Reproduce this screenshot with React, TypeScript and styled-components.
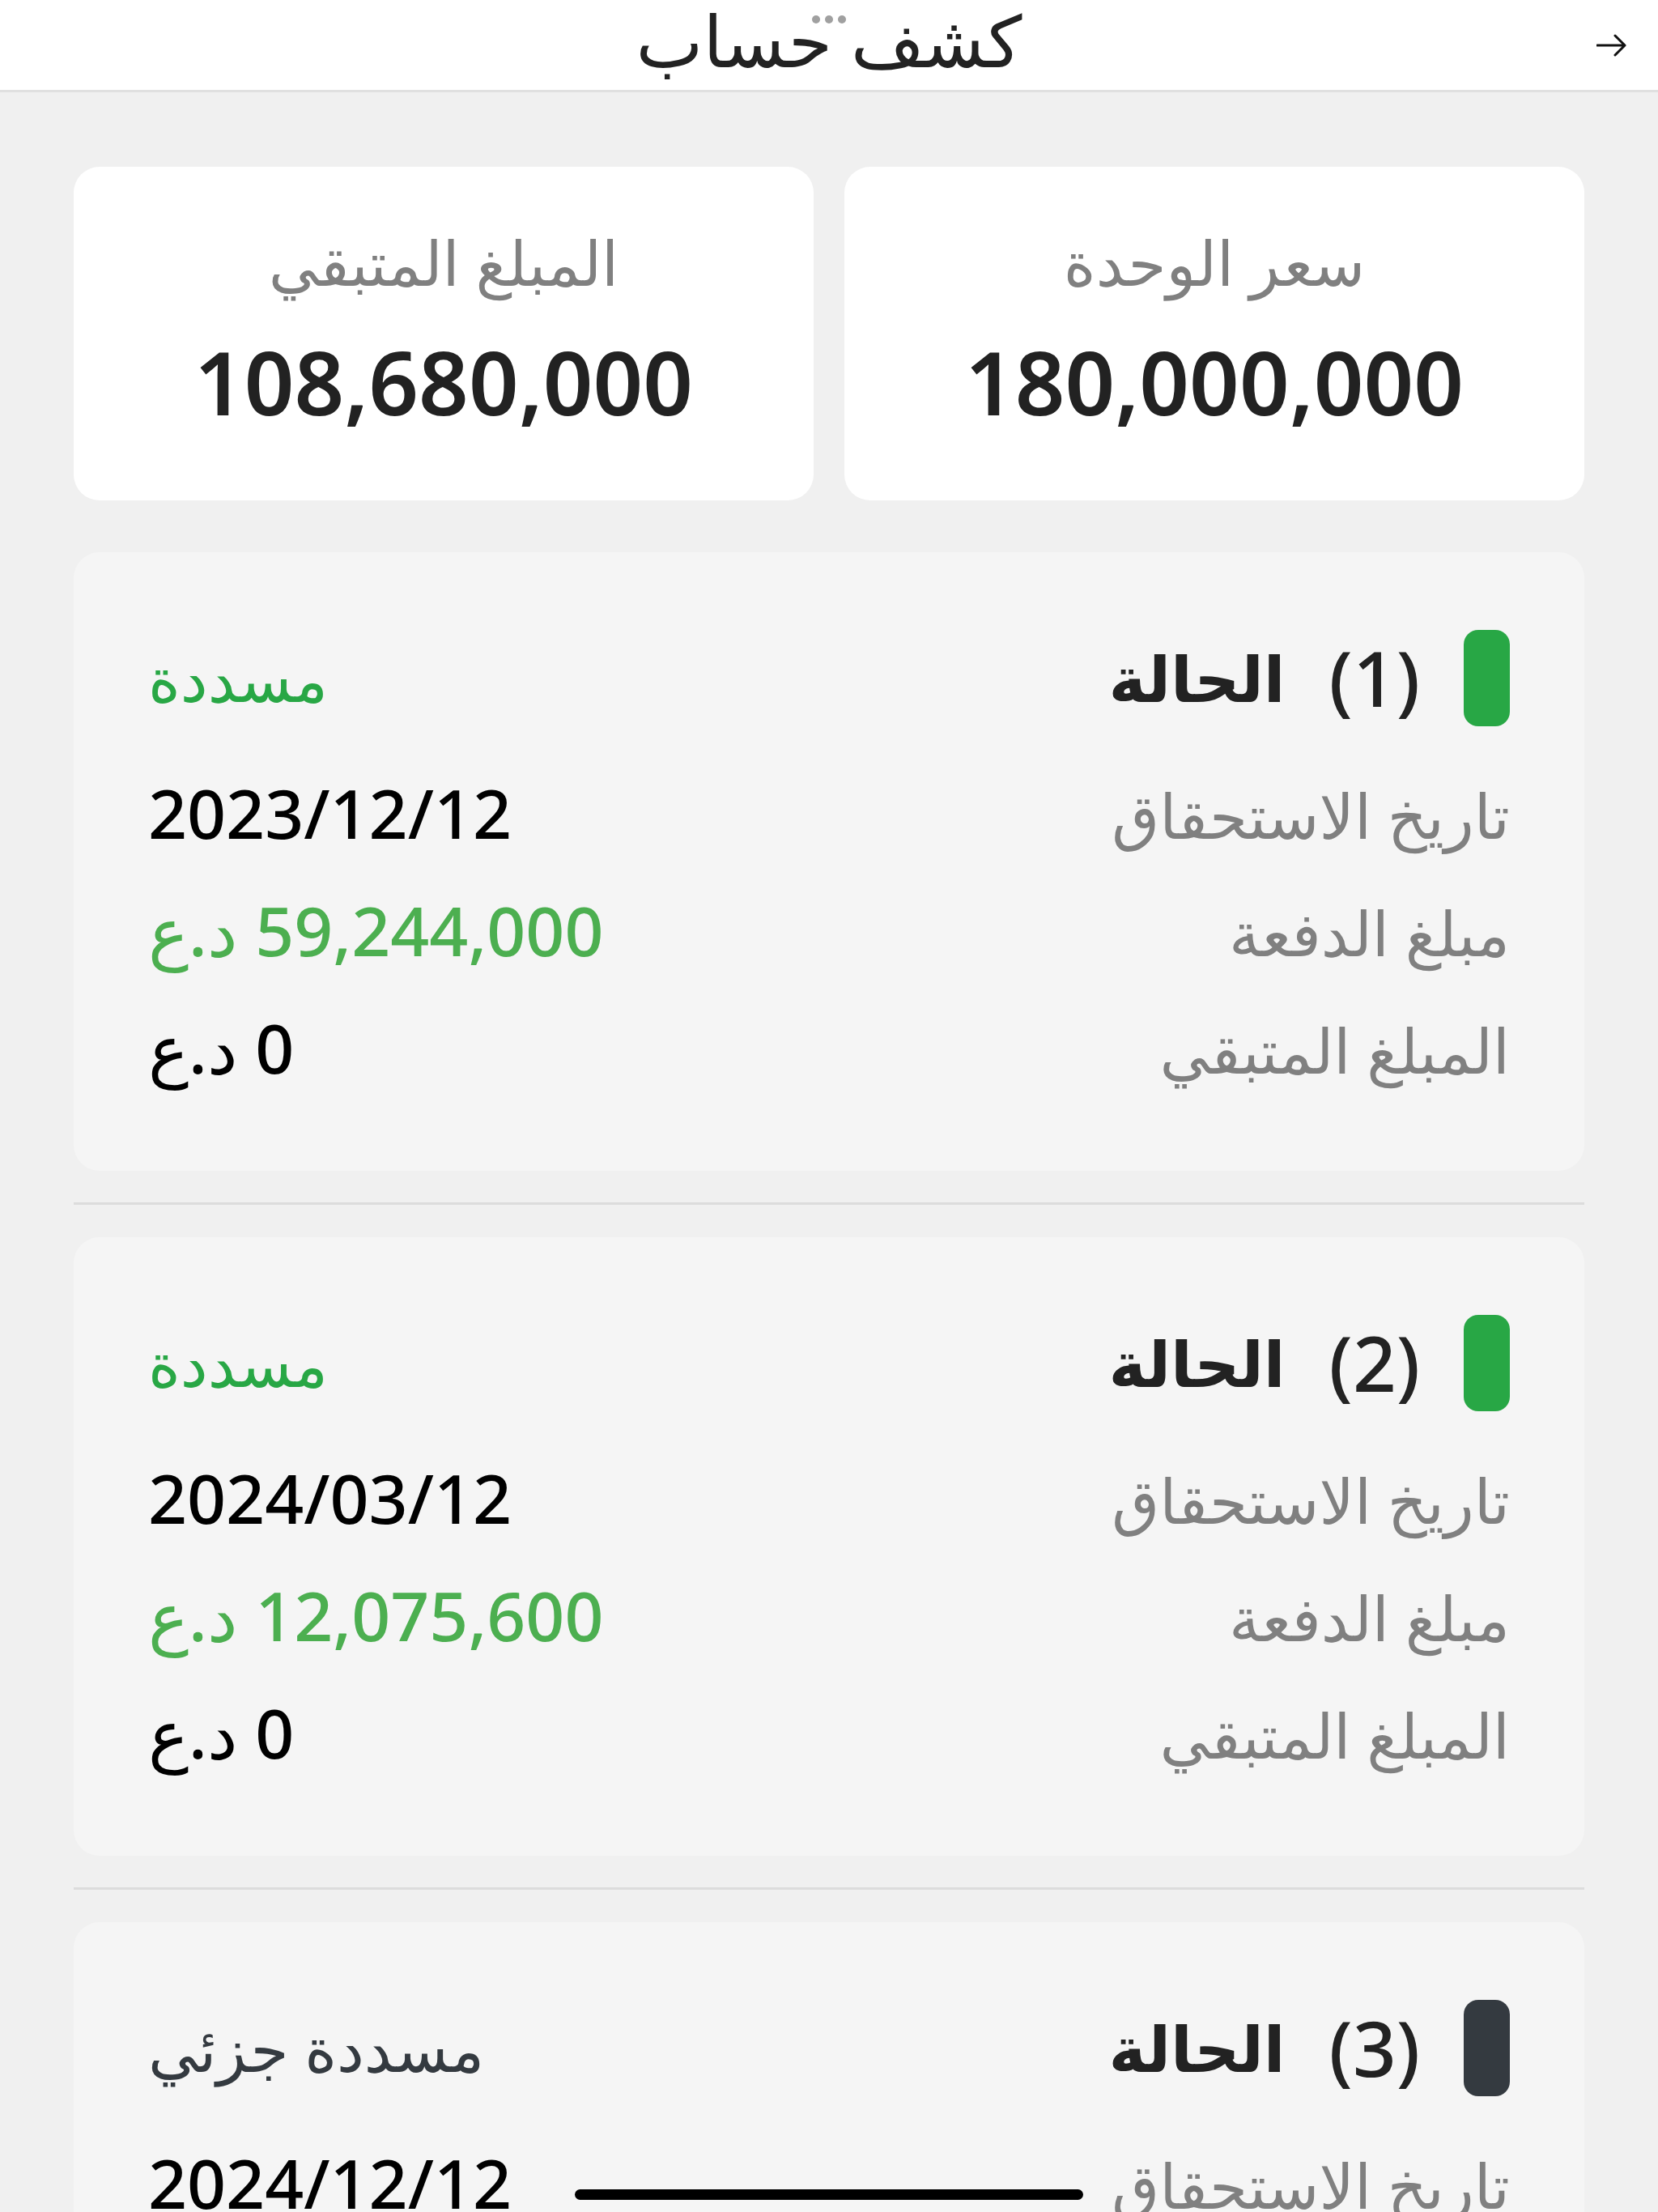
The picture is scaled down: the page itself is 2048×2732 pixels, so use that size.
import React from "react";
import styled, { createGlobalStyle } from "styled-components";

const GlobalStyle = createGlobalStyle`
  html, body {
    margin: 0;
    padding: 0;
  }
  body {
    background: #f0f0f0;
    font-family: "Noto Sans", "DejaVu Sans", sans-serif;
    color: #222;
  }
`;

const Screen = styled.div`
  position: relative;
  height: 100vh;
  overflow: hidden;
  direction: rtl;
  background: #f0f0f0;
`;

const TopBar = styled.header`
  display: grid;
  grid-template-columns: 1fr auto 1fr;
  align-items: start;
  height: 111px;
  background: #fff;
  border-bottom: 3px solid #e0e0e0;
`;

const BackButton = styled.button`
  justify-self: start;
  align-self: center;
  margin-inline-start: 38px;
  padding: 0;
  border: 0;
  background: none;
  display: flex;
  color: #111;
  cursor: pointer;
`;

const Title = styled.h1`
  margin: 0;
  font-size: 88px;
  font-weight: 400;
  line-height: 98px;
  color: #222;
`;

const WindowDots = styled.div`
  position: absolute;
  top: 19px;
  left: 50%;
  transform: translateX(-50%);
  display: flex;
  gap: 6px;
`;

const Dot = styled.span`
  width: 10px;
  height: 10px;
  border-radius: 50%;
  background: #a0a0a0;
`;

const Content = styled.main`
  padding: 92px 91px 0;
`;

const StatsGrid = styled.section`
  display: grid;
  grid-template-columns: 1fr 1fr;
  gap: 38px;
  margin-bottom: 64px;
`;

const StatCard = styled.div`
  background: #fff;
  border-radius: 32px;
  padding: 68px 24px 81px;
  text-align: center;
`;

const StatLabel = styled.div`
  font-size: 76px;
  line-height: 100px;
  color: #808080;
  margin-bottom: 33px;
`;

const StatValue = styled.div`
  font-size: 108px;
  line-height: 130px;
  font-weight: 600;
  color: #222;
  direction: ltr;
`;

const InstallmentCard = styled.article`
  background: #f5f5f5;
  border-radius: 32px;
  padding: 96px 92px 80px;
`;

const CardHeader = styled.div`
  display: flex;
  align-items: center;
  justify-content: space-between;
  height: 119px;
  margin-bottom: 34px;
`;

const HeaderStart = styled.div`
  display: flex;
  align-items: center;
  gap: 54px;
`;

const StatusBar = styled.span<{ $color: string }>`
  width: 57px;
  height: 119px;
  border-radius: 18px;
  background: ${({ $color }) => $color};
`;

const Index = styled.span`
  font-size: 94px;
  font-weight: 500;
  line-height: 119px;
  color: #222;
`;

const HeaderTitle = styled.span`
  font-size: 78px;
  font-weight: 700;
  line-height: 119px;
  color: #222;
`;

const StatusText = styled.span<{ $color: string }>`
  font-size: 76px;
  line-height: 119px;
  color: ${({ $color }) => $color};
`;

const Row = styled.div`
  display: flex;
  justify-content: space-between;
  align-items: baseline;
  height: 145px;
  font-size: 84px;
  line-height: 145px;
`;

const RowLabel = styled.span`
  font-size: 76px;
  color: #808080;
`;

const RowValue = styled.span<{ $color?: string }>`
  font-weight: 500;
  color: ${({ $color }) => $color || "#000"};
`;

const Separator = styled.hr`
  margin: 39px 0 40px;
  border: 0;
  border-top: 3px solid #dcdcdc;
`;

const HomeIndicator = styled.div`
  position: absolute;
  bottom: 15px;
  left: 50%;
  transform: translateX(-50%);
  width: 628px;
  height: 13px;
  border-radius: 7px;
  background: #000;
`;

type Installment = {
  index: number;
  status: string;
  statusColor: string;
  barColor: string;
  dueDate: string;
  payment: string;
  remaining: string;
};

const installments: Installment[] = [
  {
    index: 1,
    status: "مسددة",
    statusColor: "#28a745",
    barColor: "#28a745",
    dueDate: "2023/12/12",
    payment: "59,244,000 د.ع",
    remaining: "0 د.ع",
  },
  {
    index: 2,
    status: "مسددة",
    statusColor: "#28a745",
    barColor: "#28a745",
    dueDate: "2024/03/12",
    payment: "12,075,600 د.ع",
    remaining: "0 د.ع",
  },
  {
    index: 3,
    status: "مسددة جزئي",
    statusColor: "#343a40",
    barColor: "#343a40",
    dueDate: "2024/12/12",
    payment: "12,075,600 د.ع",
    remaining: "6,037,800 د.ع",
  },
];

function ArrowIcon() {
  return (
    <svg width="38" height="28" viewBox="0 0 38 28" fill="none">
      <path
        d="M1 14H35M23 2L35 14L23 26"
        stroke="currentColor"
        strokeWidth="3"
        strokeLinecap="round"
        strokeLinejoin="round"
      />
    </svg>
  );
}

export default function App() {
  return (
    <>
      <GlobalStyle />
      <Screen>
        <TopBar>
          <BackButton aria-label="رجوع">
            <ArrowIcon />
          </BackButton>
          <Title>كشف حساب</Title>
          <span />
        </TopBar>
        <WindowDots>
          <Dot />
          <Dot />
          <Dot />
        </WindowDots>

        <Content>
          <StatsGrid>
            <StatCard>
              <StatLabel>سعر الوحدة</StatLabel>
              <StatValue>180,000,000</StatValue>
            </StatCard>
            <StatCard>
              <StatLabel>المبلغ المتبقي</StatLabel>
              <StatValue>108,680,000</StatValue>
            </StatCard>
          </StatsGrid>

          {installments.map((item, i) => (
            <React.Fragment key={item.index}>
              {i > 0 && <Separator />}
              <InstallmentCard>
                <CardHeader>
                  <HeaderStart>
                    <StatusBar $color={item.barColor} />
                    <Index>({item.index})</Index>
                    <HeaderTitle>الحالة</HeaderTitle>
                  </HeaderStart>
                  <StatusText $color={item.statusColor}>{item.status}</StatusText>
                </CardHeader>
                <Row>
                  <RowLabel>تاريخ الاستحقاق</RowLabel>
                  <RowValue>{item.dueDate}</RowValue>
                </Row>
                <Row>
                  <RowLabel>مبلغ الدفعة</RowLabel>
                  <RowValue $color="#4caf50">{item.payment}</RowValue>
                </Row>
                <Row>
                  <RowLabel>المبلغ المتبقي</RowLabel>
                  <RowValue>{item.remaining}</RowValue>
                </Row>
              </InstallmentCard>
            </React.Fragment>
          ))}
        </Content>

        <HomeIndicator />
      </Screen>
    </>
  );
}
